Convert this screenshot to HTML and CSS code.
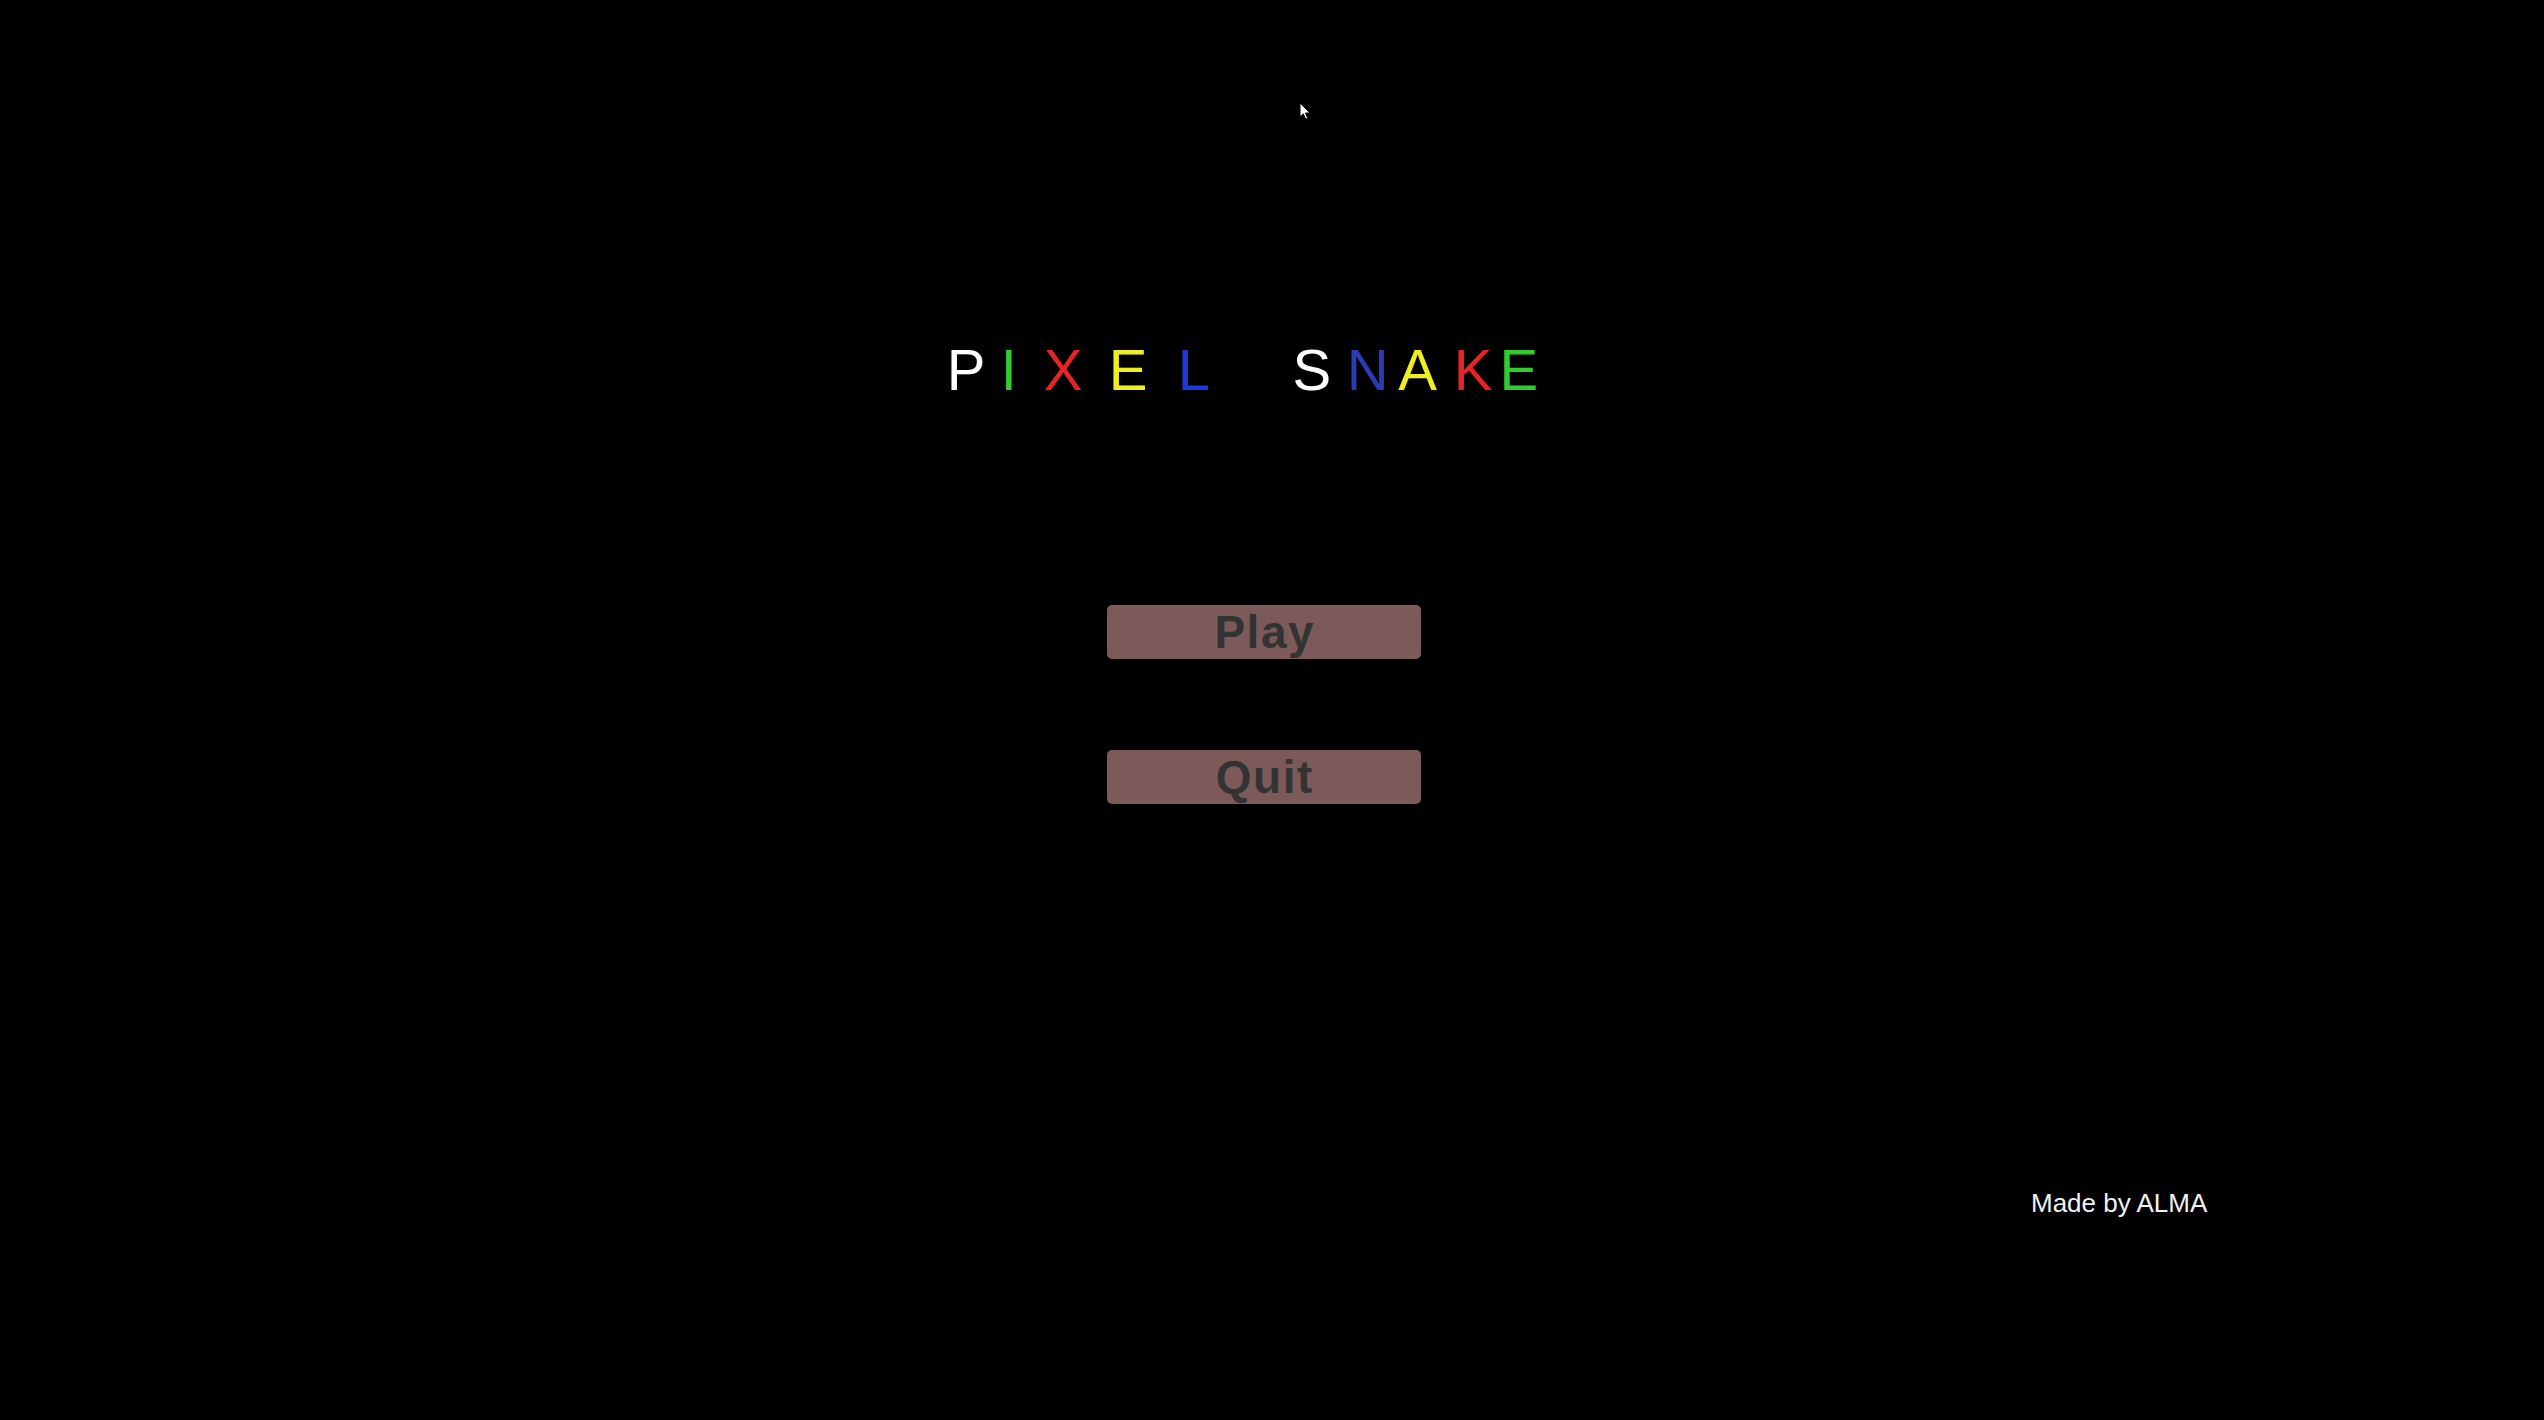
FILE: index.html
```html
<!DOCTYPE html>
<html lang="en">
<head>
<meta charset="utf-8">
<title>Pixel Snake</title>
<link rel="stylesheet" href="styles.css">
</head>
<body>
<main class="menu">
  <h1 class="title">
    <span class="l white">P</span><span class="l green">I</span><span class="l red">X</span><span class="l yellow">E</span><span class="l blue">L</span><span class="l white">S</span><span class="l navy">N</span><span class="l yellow">A</span><span class="l red">K</span><span class="l green">E</span>
  </h1>
  <button class="btn btn-play">Play</button>
  <button class="btn btn-quit">Quit</button>
  <p class="credit">Made by ALMA</p>
</main>
<svg class="cursor" width="13" height="19" viewBox="0 0 13 19"><path d="M1 1 L1 15 L4.3 11.9 L6.6 17.2 L8.8 16.3 L6.5 11 L11 11 Z" fill="#fff" stroke="#000" stroke-width="1"/></svg>
</body>
</html>
```
FILE: styles.css
```css
html, body {
  margin: 0;
  padding: 0;
  background: #000;
}
body {
  width: 2544px;
  height: 1420px;
  overflow: hidden;
  position: relative;
  font-family: "Liberation Sans", Arial, sans-serif;
}
.menu {
  display: flex;
  flex-direction: column;
  align-items: center;
  padding-top: 341px;
}
.title {
  display: flex;
  margin: 0 59px 0 0;
  font-size: 58px;
  line-height: 58px;
  font-weight: normal;
}
.l:nth-child(2) { margin-left: 15.4px; }
.l:nth-child(3) { margin-left: 26.9px; }
.l:nth-child(4) { margin-left: 26.2px; }
.l:nth-child(5) { margin-left: 30.3px; }
.l:nth-child(6) { margin-left: 82.7px; }
.l:nth-child(7) { margin-left: 15.4px; }
.l:nth-child(8) { margin-left: 9.7px; }
.l:nth-child(9) { margin-left: 16.7px; }
.l:nth-child(10) { margin-left: 7.3px; }
.white { color: #ffffff; }
.green { color: #33cc2f; }
.red { color: #e52424; }
.yellow { color: #eeee22; }
.blue { color: #1e3ade; }
.navy { color: #2b3bb8; }

.btn {
  display: flex;
  align-items: center;
  justify-content: center;
  width: 314px;
  height: 54px;
  margin: 0 16px 0 0;
  padding: 0;
  border: none;
  border-radius: 5px;
  background: #7c5a5a;
  color: #333333;
  font-family: "Liberation Sans", Arial, sans-serif;
  font-weight: bold;
  font-size: 46px;
  line-height: 46px;
  letter-spacing: 1.5px;
  text-indent: 1.5px;
}
.btn-play { margin-top: 206px; }
.btn-quit { margin-top: 91px; }

.credit {
  align-self: flex-start;
  margin: 386px 0 0 2031px;
  color: #f2f2f2;
  font-size: 26px;
  line-height: 26px;
}
.cursor {
  position: absolute;
  left: 1299px;
  top: 102px;
}
```
